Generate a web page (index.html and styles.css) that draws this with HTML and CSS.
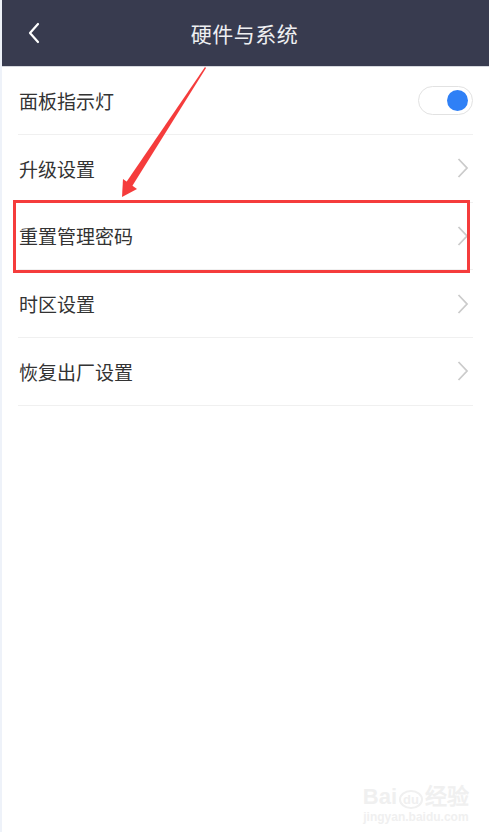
FILE: index.html
```html
<!DOCTYPE html>
<html lang="zh-CN">
<head>
  <meta charset="UTF-8">
  <title>硬件与系统</title>
  <meta name="viewport" content="width=device-width, initial-scale=1">
  <link rel="stylesheet" href="styles.css">
</head>
<body>
  <div class="header">
    <span class="back">
      <svg width="14" height="22" viewBox="0 0 14 22"><path d="M11 2 L3 11 L11 20" fill="none" stroke="#fff" stroke-width="2.2" stroke-linecap="round" stroke-linejoin="round"/></svg>
    </span>
    <h1>硬件与系统</h1>
  </div>

  <div class="list">
    <div class="row">
      <span class="label">面板指示灯</span>
      <span class="switch"><span class="knob"></span></span>
    </div>
    <div class="row">
      <span class="label">升级设置</span>
      <svg class="arrow" width="12" height="20" viewBox="0 0 12 20"><path d="M1.5 1 L10 10 L1.5 19" fill="none" stroke="#cbcbcb" stroke-width="1.8"/></svg>
    </div>
    <div class="row">
      <span class="label">重置管理密码</span>
      <svg class="arrow" width="12" height="20" viewBox="0 0 12 20"><path d="M1.5 1 L10 10 L1.5 19" fill="none" stroke="#cbcbcb" stroke-width="1.8"/></svg>
    </div>
    <div class="row">
      <span class="label">时区设置</span>
      <svg class="arrow" width="12" height="20" viewBox="0 0 12 20"><path d="M1.5 1 L10 10 L1.5 19" fill="none" stroke="#cbcbcb" stroke-width="1.8"/></svg>
    </div>
    <div class="row">
      <span class="label">恢复出厂设置</span>
      <svg class="arrow" width="12" height="20" viewBox="0 0 12 20"><path d="M1.5 1 L10 10 L1.5 19" fill="none" stroke="#cbcbcb" stroke-width="1.8"/></svg>
    </div>
  </div>

  <!-- annotation drawn over the screenshot -->
  <div class="mark-box"></div>
  <svg class="mark-arrow" width="489" height="210" viewBox="0 0 489 210">
    <polygon points="205,67 206,68 131,188 125,184" fill="#f53c3c"/>
    <polygon points="122,197 123,179 137,189" fill="#f53c3c"/>
  </svg>

  <div class="watermark">
    <div class="wm-top">Bai<span class="wm-du">du</span>经验</div>
    <div class="wm-url">jingyan.baidu.com</div>
  </div>
</body>
</html>
```

FILE: styles.css
```css
body {
  margin: 0;
  width: 489px;
  height: 832px;
  background: #fff;
  font-family: "Noto Sans CJK SC", "Noto Sans", sans-serif;
  color: #333;
  position: relative;
  overflow: hidden;
  border-left: 2px solid #eef2f9;
  box-sizing: border-box;
}
.header {
  height: 66px;
  background: #383b4f;
  border-bottom: 1px solid #d6d8de;
  display: flex;
  align-items: center;
  justify-content: center;
  position: relative;
  margin-left: -2px;
}
.header h1 {
  margin: 0;
  font-size: 21px;
  font-weight: normal;
  color: #eeeff2;
  letter-spacing: 0.5px;
}
.back {
  position: absolute;
  left: 27px;
  top: 22px;
  display: flex;
}
.list {
  padding: 0 16px 0 16px;
}
.row {
  height: 67.75px;
  box-sizing: border-box;
  border-bottom: 1px solid #f0f0f0;
  display: flex;
  align-items: center;
  justify-content: space-between;
}
.label {
  font-size: 19px;
  padding-left: 1px;
}
.arrow {
  margin-right: 4px;
}
.switch {
  width: 49px;
  height: 27px;
  border: 1px solid #e2e2e2;
  border-radius: 15px;
  display: flex;
  align-items: center;
  justify-content: flex-end;
  padding-right: 4px;
  box-sizing: content-box;
}
.knob {
  width: 21px;
  height: 21px;
  border-radius: 50%;
  background: #2f80f6;
}
.mark-box {
  position: absolute;
  left: 11px;
  top: 200px;
  width: 457px;
  height: 73px;
  border: 3px solid #f53c3c;
  box-sizing: border-box;
}
.mark-arrow {
  position: absolute;
  left: -2px;
  top: 0;
}
.watermark {
  position: absolute;
  right: 20px;
  bottom: 8px;
  color: #f0f0f0;
  font-family: "Liberation Sans", sans-serif;
  text-align: center;
}
.wm-top {
  font-size: 22px;
  font-weight: bold;
}
.wm-du {
  display: inline-block;
  font-size: 13px;
  border: 2px solid #f0f0f0;
  border-radius: 50%;
  padding: 0 2px;
  margin: 0 2px;
}
.wm-url {
  font-size: 12px;
  font-weight: bold;
}
```
